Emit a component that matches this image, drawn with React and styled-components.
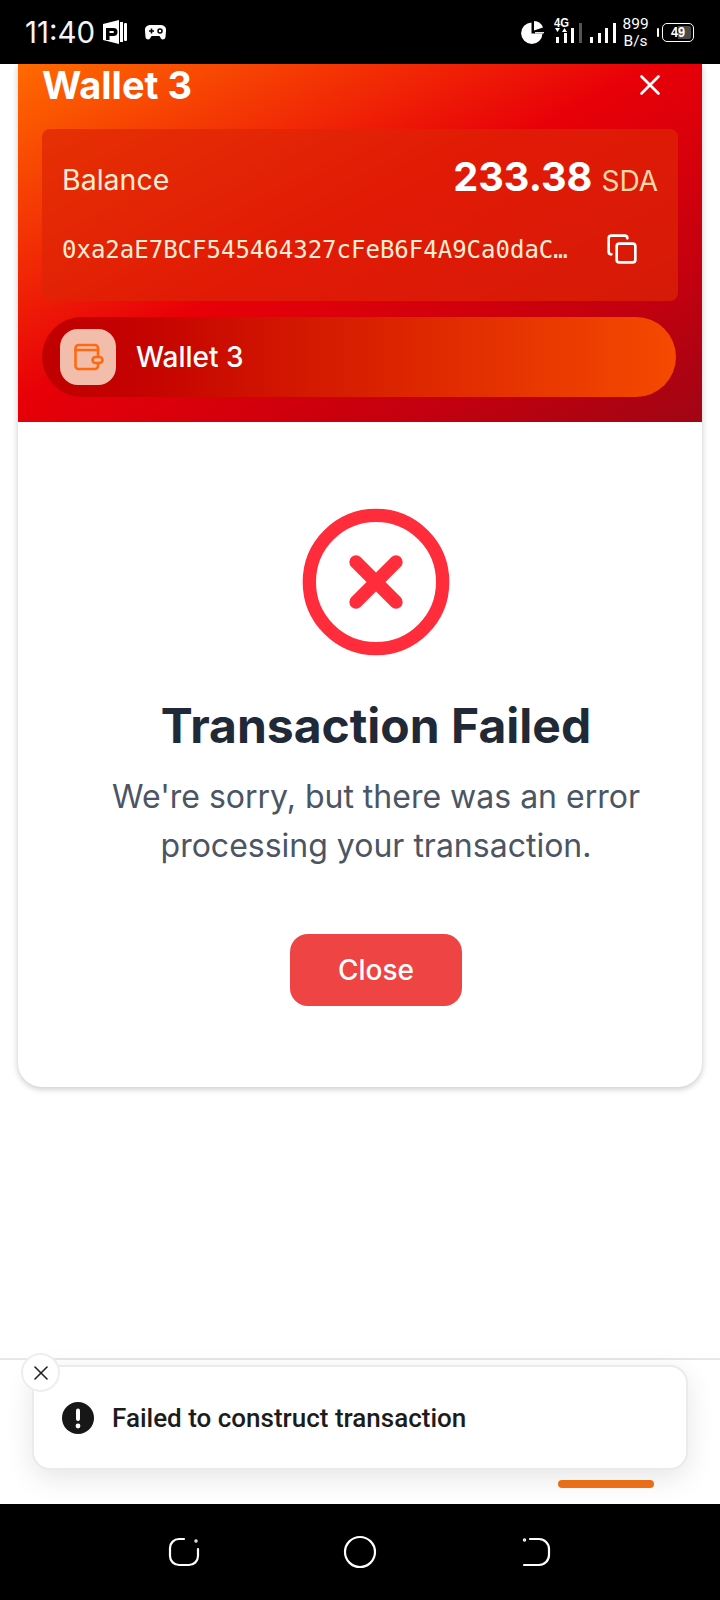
import React from "react";
import styled, { createGlobalStyle } from "styled-components";
import { X, XCircle, Copy } from "lucide-react";

const Global = createGlobalStyle`
  html, body { margin: 0; padding: 0; background: #fff; }
  * { box-sizing: border-box; }
  body { font-family: Inter, "Noto Sans", sans-serif; }
`;

const Page = styled.div`
  width: 720px;
  height: 1600px;
  display: flex;
  flex-direction: column;
  background: #fff;
`;

const StatusBar = styled.div`
  height: 64px;
  flex: none;
  background: #000;
  color: #fff;
  display: flex;
  align-items: center;
  padding: 0 26px 0 25px;
`;
const Time = styled.span`
  font: 400 29.5px/1 Inter, sans-serif;
  color: #f4f4f4;
  width: 78px;
  padding-top: 2px;
  white-space: nowrap;
`;
const StatusIcon = styled.svg`
  display: block;
  flex: none;
  margin-left: ${(p) => p.$gap || 0}px;
`;
const Spacer = styled.div`
  flex: 1;
`;
const Speed = styled.div`
  font: 400 15.5px/17px Roboto, sans-serif;
  width: 26px;
  margin-left: 7px;
  text-align: center;
  white-space: nowrap;
  padding-top: 1px;
`;
const Battery = styled.div`
  width: 32px;
  height: 19px;
  border: 1.5px solid #fff;
  border-radius: 5px;
  margin-left: 3px;
  padding: 2px;
  position: relative;
  display: flex;
  justify-content: flex-end;
`;
const BatteryFill = styled.div`
  width: 13px;
  background: #4a4a4a;
  border-radius: 0 2px 2px 0;
`;
const BatteryText = styled.span`
  position: absolute;
  left: 0;
  right: 0;
  top: 0;
  text-align: center;
  font: 700 15px/16px "Liberation Sans", sans-serif;
  transform: scaleX(0.85);
`;
const BatteryTip = styled.div`
  width: 2.5px;
  height: 9px;
  background: #fff;
  margin-left: 8px;
  border-radius: 1px;
`;

const Content = styled.main`
  height: 1294px;
  flex: none;
  padding: 0 18px;
`;
const Card = styled.section`
  background: #fff;
  border-radius: 0 0 24px 24px;
  box-shadow: 0 2px 6px rgba(0, 0, 0, 0.22);
`;
const Header = styled.header`
  height: 358px;
  padding: 0 24px;
  background: linear-gradient(
    to bottom right,
    #ff6a00 0%,
    #e80008 47%,
    #c4000f 78%,
    #a00514 100%
  );
`;
const TitleRow = styled.div`
  height: 42px;
  display: flex;
  align-items: center;
  justify-content: space-between;
  margin-bottom: 23px;
`;
const Title = styled.h1`
  margin: 0;
  font: 700 38px/42px Inter, sans-serif;
  color: #fff;
  white-space: nowrap;
`;
const IconButton = styled.button`
  border: 0;
  background: none;
  padding: 0;
  color: #fff;
  display: flex;
`;
const CloseButton = styled(IconButton)`
  margin-right: 11px;
`;
const Panel = styled.div`
  height: 172px;
  padding: 0 20px;
  border-radius: 8px;
  background: rgba(222, 36, 6, 0.72);
  display: flex;
  flex-direction: column;
`;
const BalanceRow = styled.div`
  height: 102px;
  display: flex;
  align-items: center;
  justify-content: space-between;
`;
const BalanceLabel = styled.span`
  font: 400 28.5px/1 Inter, sans-serif;
  color: #ffedd5;
  padding-top: 1px;
`;
const Amount = styled.span`
  display: flex;
  align-items: baseline;
  gap: 9px;
  margin-bottom: 5px;
`;
const AmountValue = styled.span`
  font: 700 39.7px/1 Inter, sans-serif;
  color: #fff;
`;
const Currency = styled.span`
  font: 400 28px/1 Inter, sans-serif;
  color: #fed7aa;
`;
const AddressRow = styled.div`
  display: flex;
  align-items: center;
  height: 36px;
`;
const Address = styled.span`
  width: 510px;
  padding-top: 1px;
  font: 400 24px/36px "DejaVu Sans Mono", monospace;
  color: #ffedd5;
  white-space: nowrap;
`;
const CopyButton = styled(IconButton)`
  margin-left: 34px;
`;
const WalletPill = styled.div`
  margin-top: 16px;
  width: 634px;
  height: 80px;
  border-radius: 40px;
  padding: 0 18px;
  display: flex;
  align-items: center;
  gap: 20px;
  background: linear-gradient(to right, #c00000 0%, #c40200 15%, #f54a00 100%);
  color: #fff;
  font: 500 28px/1 Inter, sans-serif;
`;
const WalletBadge = styled.div`
  width: 56px;
  height: 56px;
  border-radius: 18px;
  background: #f3bdab;
  display: flex;
  align-items: center;
  justify-content: center;
`;
const Body = styled.div`
  padding: 80px 40px 81px 72px;
  display: flex;
  flex-direction: column;
  align-items: center;
  text-align: center;
`;
const FailIcon = styled(XCircle)`
  display: block;
  color: #ff2d3c;
  margin-bottom: 34px;
`;
const FailTitle = styled.h2`
  margin: 0 0 16px;
  font: 700 48px/60px Inter, sans-serif;
  color: #1f2937;
`;
const FailText = styled.p`
  margin: 0 0 64px;
  font: 400 32px/49px Inter, sans-serif;
  color: #4b5563;
  max-width: 560px;
`;
const CloseAction = styled.button`
  width: 172px;
  height: 72px;
  border: 0;
  border-radius: 18px;
  background: #ef4444;
  color: #fff;
  font: 500 28px/1 Inter, sans-serif;
`;

const ToastDock = styled.div`
  height: 146px;
  flex: none;
  border-top: 2px solid #e7e7e7;
  padding: 5px 32px 0;
  display: flex;
  flex-direction: column;
`;
const Toast = styled.div`
  position: relative;
  height: 105px;
  background: #fff;
  border: 2px solid #ebebeb;
  border-radius: 18px;
  box-shadow: 0 8px 28px rgba(0, 0, 0, 0.1);
  padding: 0 28px;
  display: flex;
  align-items: center;
  gap: 18px;
  font: 500 26px/1 Roboto, sans-serif;
  color: #1c1c1c;
`;
const ToastClose = styled.button`
  position: absolute;
  left: -13px;
  top: -14px;
  width: 39px;
  height: 39px;
  padding: 0;
  border-radius: 50%;
  border: 2px solid #eeeeee;
  background: #fff;
  color: #222;
  display: flex;
  align-items: center;
  justify-content: center;
`;
const Progress = styled.div`
  width: 96px;
  height: 8px;
  margin: 10px 34px 0 auto;
  border-radius: 4px;
  background: #f37318;
`;

const NavBar = styled.nav`
  height: 96px;
  flex: none;
  background: #000;
  display: grid;
  grid-template-columns: repeat(3, 176px);
  justify-content: center;
  align-items: center;
  justify-items: center;
`;

const WalletIcon = () => (
  <svg width="32" height="32" viewBox="0 0 32 32" fill="none" stroke="#ff6a10" strokeWidth="2.600" strokeLinecap="round" strokeLinejoin="round">
    <path d="M26 16V7a3 3 0 0 0-3-3H6.500a3 3 0 0 0-3 3v18a3 3 0 0 0 3 3H23a3 3 0 0 0 3-3v-3" />
    <path d="M3.500 9H26" />
    <rect x="20.500" y="16" width="10" height="6" rx="3" />
  </svg>
);

export default function App() {
  return (
    <Page>
      <Global />
      <StatusBar>
        <Time>11:40</Time>
        <StatusIcon width="24" height="24" viewBox="0 0 24 24" fill="#fff">
          <path d="M0 4 16 0v24L0 20z" />
          <rect x="17" y="2" width="3" height="20" />
          <rect x="21" y="3" width="3" height="18" rx="1" />
          <path d="M3 8h7.500a4 4 0 0 1 0 8H6.500v4H3zM6.500 11v2h3.500a1 1 0 0 0 0-2z" fill="#000" fillRule="evenodd" />
        </StatusIcon>
        <StatusIcon $gap={18} width="21" height="15" viewBox="0 0 21 15">
          <path d="M5 0h11a5 5 0 0 1 5 6l-.5 6a2.500 2.500 0 0 1-4.500 1.400L14.500 11h-8L5 13.400A2.500 2.500 0 0 1 .5 12L0 6a5 5 0 0 1 5-6z" fill="#fff" />
          <path d="M4 6h5M6.500 3.500v5" stroke="#000" strokeWidth="1.600" />
          <circle cx="15" cy="6" r="2" fill="none" stroke="#000" strokeWidth="1.500" />
        </StatusIcon>
        <Spacer />
        <StatusIcon width="24" height="24" viewBox="0 0 24 24" fill="#fff">
          <path d="M10.500 2.500v11h11A10.700 10.700 0 1 1 10.500 2.500z" />
          <path d="M13 1v9.500l9-3A10 10 0 0 0 13 1z" />
          <path d="M14 12h9a10 10 0 0 1-.2 1.500H14z" opacity="0.9" />
        </StatusIcon>
        <StatusIcon $gap={9} width="62" height="30" viewBox="0 0 62 30">
          <text x="0" y="10" fontFamily="Liberation Sans, sans-serif" fontWeight="700" fontSize="12" fill="#fff" textLength="15" lengthAdjust="spacingAndGlyphs">4G</text>
          <path d="M1 11h5l-2.500 4zM8 15h5l-2.500-4z" fill="#fff" />
          <rect x="2" y="20" width="3" height="6" fill="#fff" />
          <rect x="10" y="16" width="3" height="10" fill="#fff" />
          <rect x="17" y="11" width="3" height="15" fill="#fff" />
          <rect x="25" y="6" width="3" height="20" fill="#555" />
          <rect x="36" y="20" width="3" height="6" fill="#fff" />
          <rect x="44" y="16" width="3" height="10" fill="#fff" />
          <rect x="51" y="11" width="3" height="15" fill="#fff" />
          <rect x="59" y="6" width="3" height="20" fill="#fff" />
        </StatusIcon>
        <Speed>
          899
          <br />
          B/s
        </Speed>
        <BatteryTip />
        <Battery>
          <BatteryFill />
          <BatteryText>49</BatteryText>
        </Battery>
      </StatusBar>

      <Content>
        <Card>
          <Header>
            <TitleRow>
              <Title>Wallet 3</Title>
              <CloseButton aria-label="Close wallet">
                <X size={34} strokeWidth={1.9} />
              </CloseButton>
            </TitleRow>
            <Panel>
              <BalanceRow>
                <BalanceLabel>Balance</BalanceLabel>
                <Amount>
                  <AmountValue>233.38</AmountValue>
                  <Currency>SDA</Currency>
                </Amount>
              </BalanceRow>
              <AddressRow>
                <Address>0xa2aE7BCF545464327cFeB6F4A9Ca0daC…</Address>
                <CopyButton aria-label="Copy address">
                  <Copy size={32} strokeWidth={2} />
                </CopyButton>
              </AddressRow>
            </Panel>
            <WalletPill>
              <WalletBadge>
                <WalletIcon />
              </WalletBadge>
              Wallet 3
            </WalletPill>
          </Header>
          <Body>
            <FailIcon size={160} strokeWidth={2} />
            <FailTitle>Transaction Failed</FailTitle>
            <FailText>We're sorry, but there was an error processing your transaction.</FailText>
            <CloseAction>Close</CloseAction>
          </Body>
        </Card>
      </Content>

      <ToastDock>
        <Toast>
          <ToastClose aria-label="Dismiss">
            <X size={24} strokeWidth={1.6} />
          </ToastClose>
          <svg width="32" height="32" viewBox="0 0 32 32">
            <circle cx="16" cy="16" r="16" fill="#171717" />
            <rect x="14" y="6.500" width="4" height="12.500" rx="2" fill="#fff" />
            <circle cx="16" cy="24" r="2.400" fill="#fff" />
          </svg>
          Failed to construct transaction
        </Toast>
        <Progress />
      </ToastDock>

      <NavBar>
        <svg width="32" height="32" viewBox="0 0 32 32" fill="none" stroke="#fff" strokeWidth="2.200" strokeLinecap="round">
          <path d="M16 3H11a9 9 0 0 0-9 9v8a9 9 0 0 0 9 9h10a9 9 0 0 0 9-9v-7" />
          <circle cx="28" cy="5" r="0.600" fill="#fff" />
        </svg>
        <svg width="34" height="34" viewBox="0 0 34 34" fill="none" stroke="#fff" strokeWidth="2.200">
          <circle cx="17" cy="17" r="15" />
        </svg>
        <svg width="32" height="32" viewBox="0 0 32 32" fill="none" stroke="#fff" strokeWidth="2.200" strokeLinecap="round">
          <path d="M10 3h9a10 10 0 0 1 10 10v6a10 10 0 0 1-10 10H4" />
          <circle cx="4.500" cy="4" r="0.600" fill="#fff" />
        </svg>
      </NavBar>
    </Page>
  );
}
